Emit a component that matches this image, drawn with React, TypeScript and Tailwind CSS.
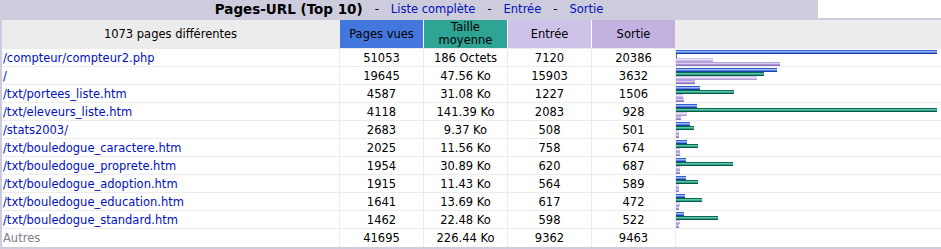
import React from 'react'

type Row = { url: string; p: number; k: string; kv: number; e: number; x: number }

const rows: Row[] = [
  { url: '/compteur/compteur2.php', p: 51053, k: '186 Octets', kv: 0.18, e: 7120, x: 20386 },
  { url: '/', p: 19645, k: '47.56 Ko', kv: 47.56, e: 15903, x: 3632 },
  { url: '/txt/portees_liste.htm', p: 4587, k: '31.08 Ko', kv: 31.08, e: 1227, x: 1506 },
  { url: '/txt/eleveurs_liste.htm', p: 4118, k: '141.39 Ko', kv: 141.39, e: 2083, x: 928 },
  { url: '/stats2003/', p: 2683, k: '9.37 Ko', kv: 9.37, e: 508, x: 501 },
  { url: '/txt/bouledogue_caractere.htm', p: 2025, k: '11.56 Ko', kv: 11.56, e: 758, x: 674 },
  { url: '/txt/bouledogue_proprete.htm', p: 1954, k: '30.89 Ko', kv: 30.89, e: 620, x: 687 },
  { url: '/txt/bouledogue_adoption.htm', p: 1915, k: '11.43 Ko', kv: 11.43, e: 564, x: 589 },
  { url: '/txt/bouledogue_education.htm', p: 1641, k: '13.69 Ko', kv: 13.69, e: 617, x: 472 },
  { url: '/txt/bouledogue_standard.htm', p: 1462, k: '22.48 Ko', kv: 22.48, e: 598, x: 522 },
]

const maxP = 51053
const maxK = 141.39
const barW = (v: number, max: number) => Math.floor((260 * v) / max) + 1

const td = 'border-r border-b border-[#ececec] px-[1px] py-0 text-center'

const Bar = ({ w, cls }: { w: number; cls: string }) => <div className={`h-[4px] ${cls}`} style={{ width: w }} />

const App = () => {
  return (
    <div className="w-[941px] bg-white font-['DejaVu_Sans',Verdana,sans-serif] text-[11.5px] leading-[14px] text-black">
      <div className="flex h-[18px]">
        <div className="w-[818px] bg-[#ccccdd] flex items-center justify-center gap-[12px]">
          <span className="font-bold text-[13.5px]">Pages-URL (Top 10)</span>
          <span>-</span>
          <span className="text-[#0011bb]">Liste complète</span>
          <span>-</span>
          <span className="text-[#0011bb]">Entrée</span>
          <span>-</span>
          <span className="text-[#0011bb]">Sortie</span>
        </div>
        <div className="flex-1 bg-white" />
      </div>
      <div className="border-l-2 border-t-2 border-b-2 border-[#ccccdd]">
        <table className="w-full table-fixed border-separate border-spacing-0">
          <colgroup>
            <col className="w-[338px]" />
            <col className="w-[84px]" />
            <col className="w-[84px]" />
            <col className="w-[84px]" />
            <col className="w-[84px]" />
            <col />
          </colgroup>
          <thead>
            <tr className="h-[29px] bg-[#ececec]">
              <th className={`${td} font-normal`}>1073 pages différentes</th>
              <th className={`${td} font-normal bg-[#4477dd] border-r-white`}>Pages vues</th>
              <th className={`${td} font-normal bg-[#2ea495] leading-[13px] border-r-white`}>Taille<br />moyenne</th>
              <th className={`${td} font-normal bg-[#cec2e8] border-r-white`}>Entrée</th>
              <th className={`${td} font-normal bg-[#c1b2e2]`}>Sortie</th>
              <th className="border-b border-[#ececec]">&nbsp;</th>
            </tr>
          </thead>
          <tbody>
            {rows.map((r) => (
              <tr key={r.url} className="h-[18px]">
                <td className={`${td} !text-left`}>
                  <span className="text-[#0011bb]">{r.url}</span>
                </td>
                <td className={td}>{r.p}</td>
                <td className={td}>{r.k}</td>
                <td className={td}>{r.e}</td>
                <td className={td}>{r.x}</td>
                <td className="border-b border-[#ececec] p-0 pt-[1px] align-top">
                  <div className="flex flex-col">
                    <Bar w={barW(r.p, maxP)} cls="bg-[linear-gradient(#2f5fcf_0_25%,#9ab8f4_25%_50%,#5a86e4_50%_75%,#1b3ea4_75%)]" />
                    <Bar w={barW(r.kv, maxK)} cls="bg-[linear-gradient(#0f6a4c_0_25%,#5cc4ad_25%_50%,#2ea495_50%_75%,#0b5a3e_75%)]" />
                    <Bar w={barW(r.e, maxP)} cls="bg-[linear-gradient(#cfc3ec_0_25%,#ebe4f8_25%_50%,#cdbfea_50%_75%,#b09cd8_75%)]" />
                    <Bar w={barW(r.x, maxP)} cls="bg-[linear-gradient(#b9a4e0_0_25%,#d8ccf2_25%_50%,#a994da_50%_75%,#8f78c6_75%)]" />
                  </div>
                </td>
              </tr>
            ))}
            <tr className="h-[18px]">
              <td className={`${td} !text-left border-b-0`}>
                <span className="text-[#808088]">Autres</span>
              </td>
              <td className={`${td} border-b-0`}>41695</td>
              <td className={`${td} border-b-0`}>226.44 Ko</td>
              <td className={`${td} border-b-0`}>9362</td>
              <td className={`${td} border-b-0`}>9463</td>
              <td>&nbsp;</td>
            </tr>
          </tbody>
        </table>
      </div>
    </div>
  )
}

export default App
